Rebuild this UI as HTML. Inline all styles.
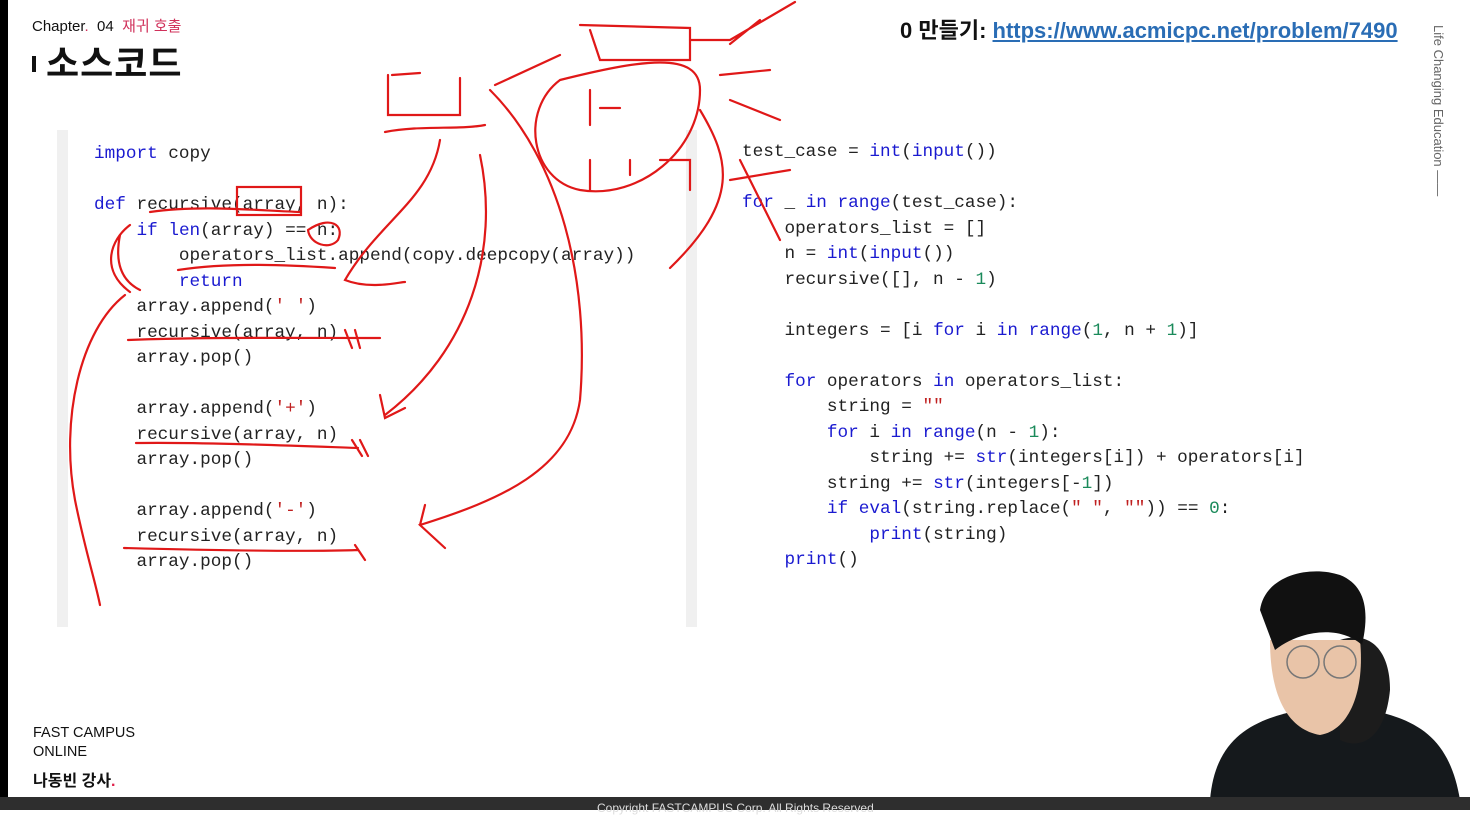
<!DOCTYPE html>
<html><head><meta charset="utf-8"><style>
*{margin:0;padding:0;box-sizing:border-box}
body{width:1470px;height:810px;background:#fff;position:relative;overflow:hidden;font-family:"Liberation Sans","Noto Sans CJK KR",sans-serif}
.abs{position:absolute}
pre{position:absolute;font-family:"Liberation Mono","DejaVu Sans Mono",monospace;font-size:17.7px;line-height:25.5px;color:#222}
.k{color:#1a1ad0}.n{color:#1a8a5a}.s{color:#c02020}
</style></head><body>
<div class="abs" style="left:0;top:0;width:8px;height:810px;background:#000"></div>
<div class="abs" style="left:32px;top:15px;font-size:15px;color:#111">Chapter<span style="color:#d0305a">.</span>&nbsp; 04 &nbsp;<span style="color:#d0305a">재귀 호출</span></div>
<div class="abs" style="left:32px;top:56px;width:4px;height:16px;background:#111"></div>
<div class="abs" style="left:46px;top:35px;font-size:36px;font-weight:bold;color:#111;letter-spacing:1px">소스코드</div>
<div class="abs" style="left:900px;top:13px;font-size:22px;font-weight:bold;color:#111;white-space:nowrap">0 만들기: <span style="color:#2a6db5;text-decoration:underline">https://www.acmicpc.net/problem/7490</span></div>
<div class="abs" style="left:1428px;top:25px;width:20px;height:205px">
<div style="transform:rotate(90deg);transform-origin:0 0;position:absolute;left:18px;top:0;white-space:nowrap;font-size:13px;color:#666">Life Changing Education ——</div></div>
<div class="abs" style="left:57px;top:130px;width:11px;height:497px;background:#f0f0f0"></div>
<div class="abs" style="left:686px;top:130px;width:11px;height:497px;background:#f0f0f0"></div>
<pre style="left:94px;top:142px"><span class="k">import</span> copy

<span class="k">def</span> recursive(array, n):
    <span class="k">if</span> <span class="k">len</span>(array) == n:
        operators_list.append(copy.deepcopy(array))
        <span class="k">return</span>
    array.append(<span class="s">' '</span>)
    recursive(array, n)
    array.pop()

    array.append(<span class="s">'+'</span>)
    recursive(array, n)
    array.pop()

    array.append(<span class="s">'-'</span>)
    recursive(array, n)
    array.pop()</pre>
<pre style="left:742px;top:140px">test_case = <span class="k">int</span>(<span class="k">input</span>())

<span class="k">for</span> _ <span class="k">in</span> <span class="k">range</span>(test_case):
    operators_list = []
    n = <span class="k">int</span>(<span class="k">input</span>())
    recursive([], n - <span class="n">1</span>)

    integers = [i <span class="k">for</span> i <span class="k">in</span> <span class="k">range</span>(<span class="n">1</span>, n + <span class="n">1</span>)]

    <span class="k">for</span> operators <span class="k">in</span> operators_list:
        string = <span class="s">""</span>
        <span class="k">for</span> i <span class="k">in</span> <span class="k">range</span>(n - <span class="n">1</span>):
            string += <span class="k">str</span>(integers[i]) + operators[i]
        string += <span class="k">str</span>(integers[-<span class="n">1</span>])
        <span class="k">if</span> <span class="k">eval</span>(string.replace(<span class="s">" "</span>, <span class="s">""</span>)) == <span class="n">0</span>:
            <span class="k">print</span>(string)
    <span class="k">print</span>()</pre>
<svg class="abs" style="left:0;top:0" width="1470" height="810" fill="none" stroke="#e01818" stroke-width="2.2" stroke-linecap="round">
<rect x="237" y="187" width="64" height="28"/>
<path d="M308 230 C330 215 345 225 338 240 C330 250 310 245 308 230"/>
<path d="M150 212 C200 205 250 210 300 212"/>
<path d="M178 270 C230 262 290 265 335 268"/>
<path d="M128 340 C200 337 300 338 380 338 M345 330 L352 348 M355 330 L360 348"/>
<path d="M136 443 C200 442 300 446 358 448 M352 440 L362 456 M360 440 L368 456"/>
<path d="M124 548 C200 550 300 552 358 550 M355 545 L365 560"/>
<path d="M130 225 C110 240 100 270 130 292 M120 235 C115 260 120 280 140 290"/>
<path d="M125 295 C80 330 60 420 75 500 C85 550 95 580 100 605"/>
<path d="M388 75 L388 115 L460 115 L460 78 M392 75 L420 73"/>
<path d="M385 132 C420 125 460 130 485 125"/>
<path d="M440 140 C430 200 380 220 345 280 C370 290 400 282 405 282"/>
<path d="M480 155 C500 250 470 350 385 415 M380 395 L385 418 L405 408"/>
<path d="M490 90 C560 160 590 280 580 400 C570 470 500 500 420 525 L445 548 M420 525 L425 505"/>
<path d="M495 85 L560 55 M580 25 L690 28 L690 60 L600 60 L590 30"/>
<path d="M690 40 L730 40 L795 2 M730 44 L760 20 M720 75 L770 70 M730 100 L780 120"/>
<path d="M560 80 C520 110 530 180 580 190 C640 200 700 150 700 90 C700 50 640 60 560 80"/>
<path d="M590 90 L590 125 M600 108 L620 108 M590 160 L590 190 M630 160 L630 175 M660 160 L690 160 L690 190"/>
<path d="M700 110 C730 160 740 200 670 268 M740 160 L780 240 M730 180 L790 170"/>
</svg>
<svg class="abs" style="left:1190px;top:570px" width="280" height="230">
<path d="M20 230 C25 170 60 150 110 140 L180 140 C230 150 260 170 270 230 Z" fill="#15191c"/>
<path d="M150 70 C180 60 200 80 200 120 C195 170 170 180 150 170 Z" fill="#1c1c1c"/>
<path d="M80 70 C80 130 100 160 130 165 C160 160 175 120 170 70 Z" fill="#e9c4a8"/>
<path d="M70 40 C75 5 120 -5 150 5 C175 15 180 40 172 75 C150 55 110 60 85 80 Z" fill="#111"/>
<circle cx="113" cy="92" r="16" stroke="#777" stroke-width="1.5" fill="none"/>
<circle cx="150" cy="92" r="16" stroke="#777" stroke-width="1.5" fill="none"/>
</svg>
<div class="abs" style="left:33px;top:724px;font-size:14.5px;color:#111;line-height:19px">FAST CAMPUS<br>ONLINE</div>
<div class="abs" style="left:33px;top:767px;font-size:16px;font-weight:bold;color:#111">나동빈 강사<span style="color:#e0204a">.</span></div>
<div class="abs" style="left:0;top:797px;width:1470px;height:13px;background:#2e2e2e"></div>
<div class="abs" style="left:597px;top:801px;font-size:12px;color:#ddd">Copyright FASTCAMPUS Corp. All Rights Reserved</div>
</body></html>
